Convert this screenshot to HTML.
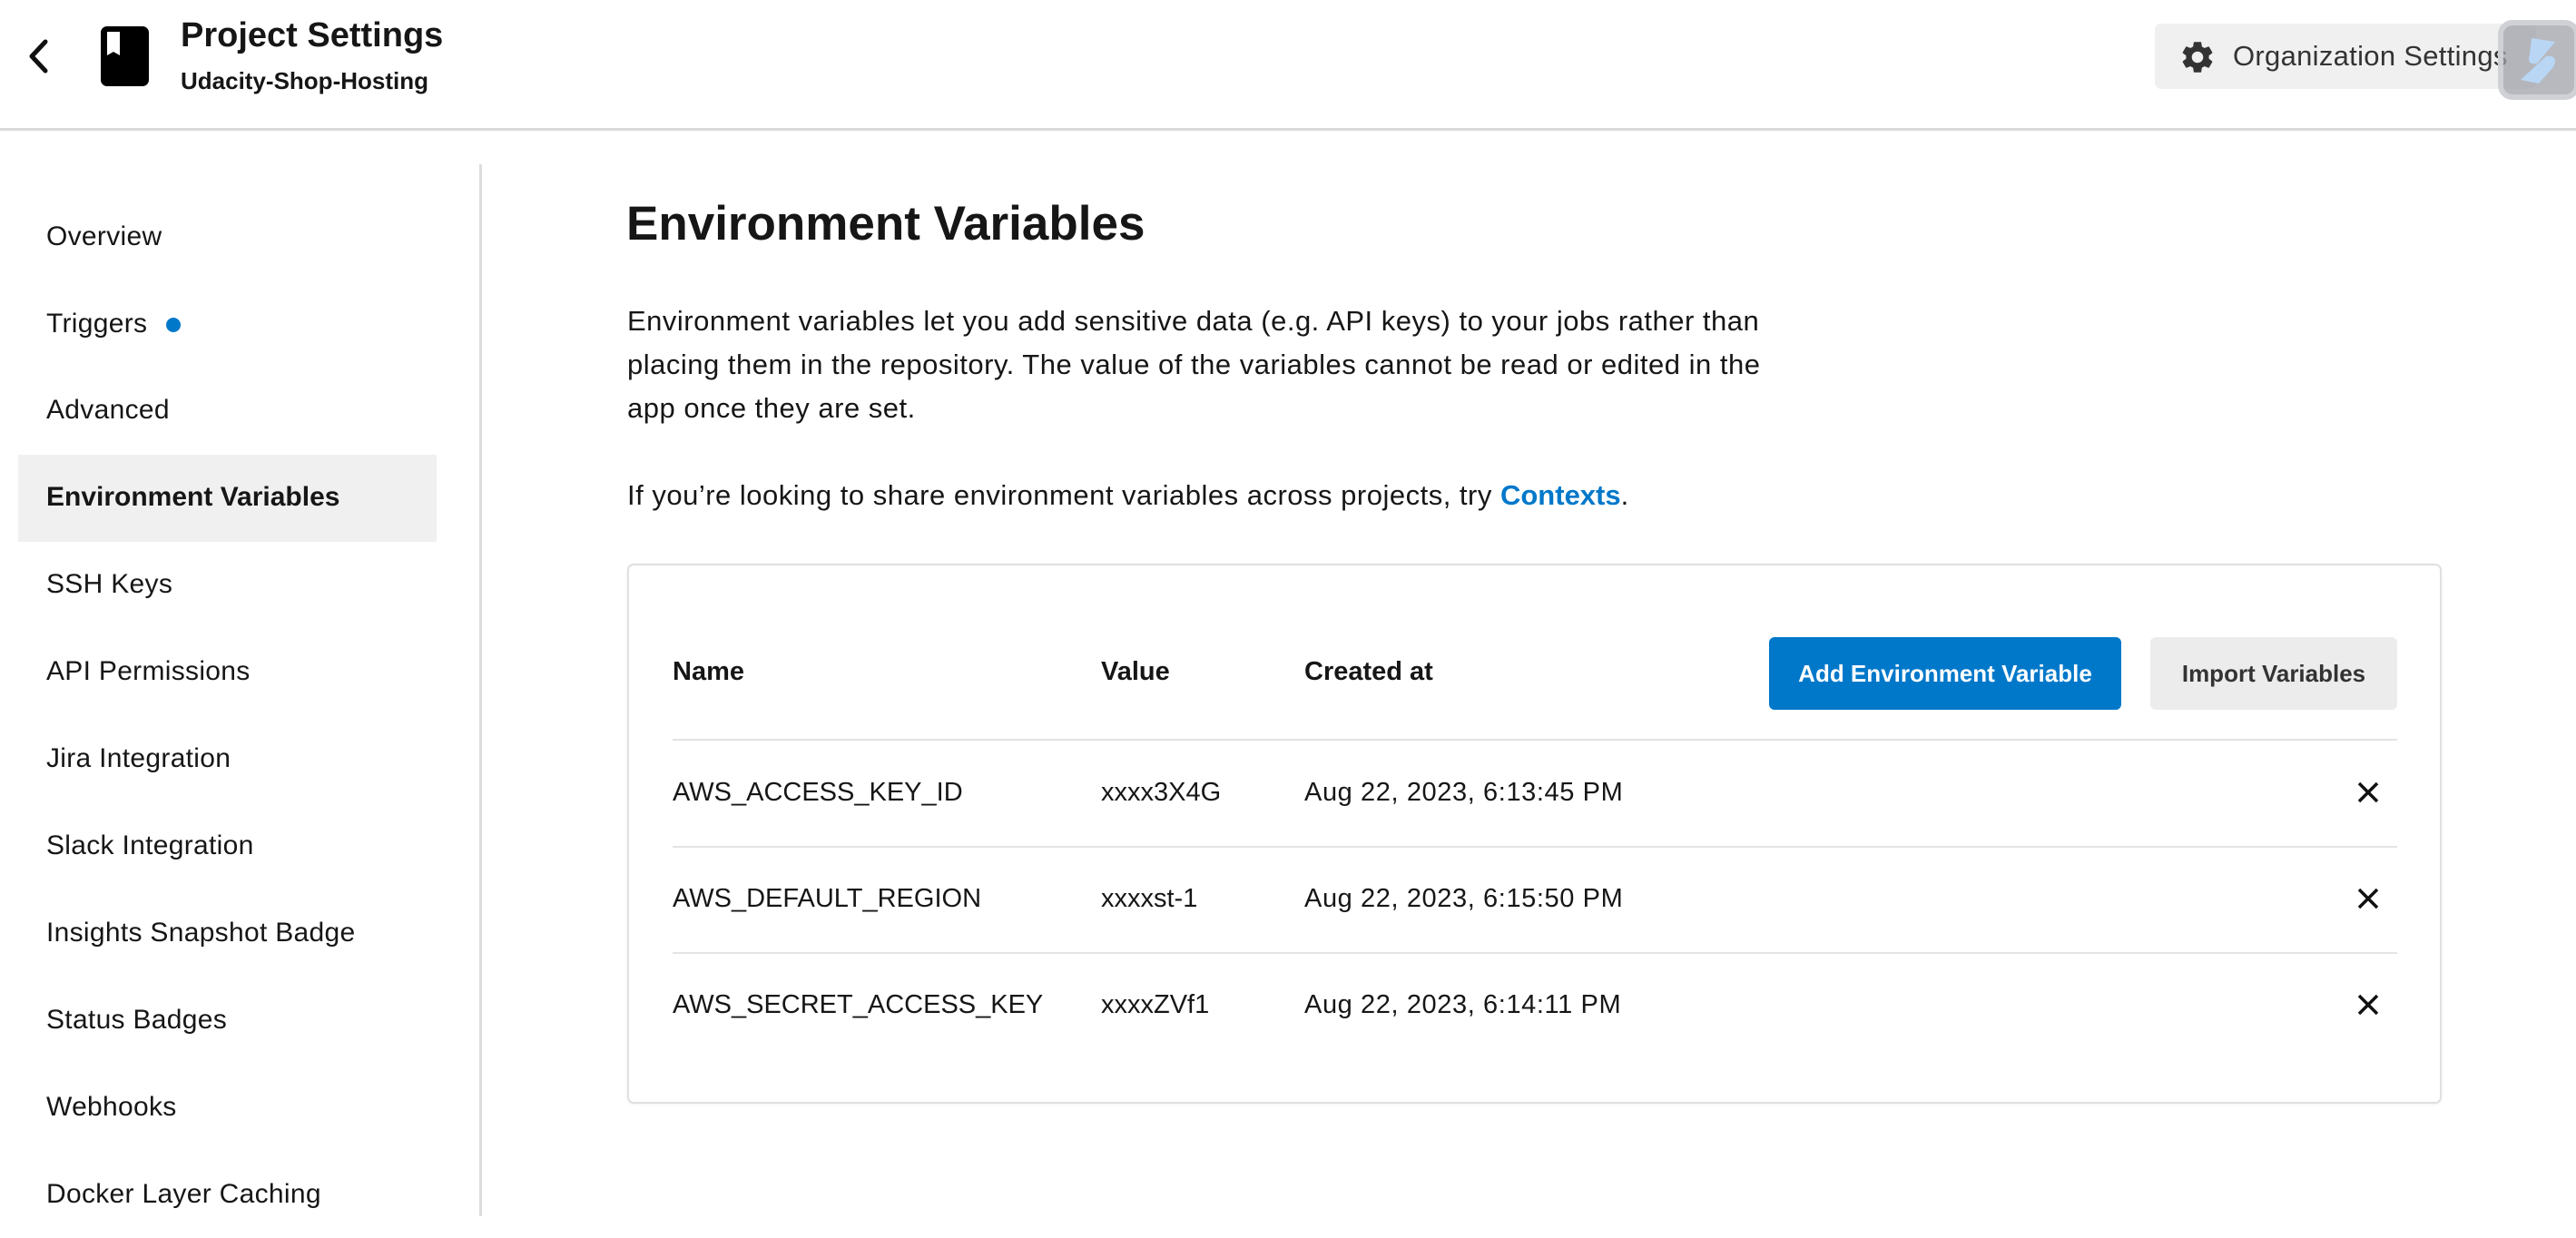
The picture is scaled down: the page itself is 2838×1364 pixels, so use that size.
<!DOCTYPE html>
<html><head><meta charset="utf-8"><style>
*{margin:0;padding:0;box-sizing:border-box}
body{width:2838px;height:1340px;overflow:hidden;background:#fff;font-family:"Liberation Sans",sans-serif;color:#161616;position:relative}
.a{position:absolute;white-space:nowrap}
.nav{position:absolute;left:51px;font-size:30px;height:96px;line-height:96px;letter-spacing:0.3px}
.th{font-weight:bold;font-size:29px}
.td{font-size:29px}
.sep{position:absolute;left:741px;width:1900px;height:2px;background:#e3e3e3}
</style></head><body>
<svg class="a" style="left:28px;top:42px" width="28" height="40" viewBox="0 0 28 40"><path d="M22 4 L7 20 L22 36" fill="none" stroke="#111" stroke-width="5" stroke-linecap="round" stroke-linejoin="round"/></svg>
<svg class="a" style="left:110px;top:28px" width="58" height="68" viewBox="0 0 58 68"><rect x="1" y="1" width="53" height="66" rx="7" fill="#000"/><path d="M8 7 h14 v26 l-7 -4 l-7 4 z" fill="#fff"/></svg>
<div class="a" style="left:199px;top:18px;font-size:38px;font-weight:bold">Project Settings</div>
<div class="a" style="left:199px;top:74px;font-size:26px;font-weight:bold">Udacity-Shop-Hosting</div>
<div class="a" style="left:2374px;top:26px;width:420px;height:72px;background:#f0f0f0;border-radius:7px"></div>
<svg class="a" style="left:2400px;top:42px" width="42" height="42" viewBox="0 0 24 24"><path fill="#333" d="M19.14 12.94c.04-.3.06-.61.06-.94 0-.32-.02-.64-.07-.94l2.030-1.580a.49.49 0 0 0 .12-.61l-1.920-3.320a.49.49 0 0 0-.59-.22l-2.390.96c-.5-.38-1.030-.7-1.620-.94l-.36-2.540a.48.48 0 0 0-.48-.41h-3.840c-.24 0-.43.17-.47.41l-.36 2.540c-.59.24-1.130.57-1.620.94l-2.390-.96a.48.48 0 0 0-.59.22L2.740 8.870c-.12.21-.08.47.12.61l2.030 1.580c-.05.3-.09.63-.09.94s.02.64.07.94l-2.030 1.580a.49.49 0 0 0-.12.61l1.920 3.320c.12.22.37.29.59.22l2.390-.96c.5.38 1.030.7 1.620.94l.36 2.540c.05.24.24.41.48.41h3.840c.24 0 .44-.17.47-.41l.36-2.540c.59-.24 1.130-.56 1.620-.94l2.390.96c.22.08.47 0 .59-.22l1.920-3.320c.12-.22.07-.47-.12-.61l-2.010-1.580zM12 15.6c-1.980 0-3.6-1.620-3.6-3.6s1.620-3.6 3.6-3.6 3.6 1.620 3.6 3.6-1.620 3.6-3.6 3.6z"/></svg>
<div class="a" style="left:2460px;top:44px;font-size:31px;color:#333;letter-spacing:0.3px">Organization Settings</div>
<div class="a" style="left:2752px;top:22px;width:90px;height:88px;border-radius:16px;background:rgba(160,162,168,.75);border:6px solid rgba(210,212,216,.9)"></div>
<svg class="a" style="left:2775px;top:40px" width="50" height="55" viewBox="0 0 50 55"><path d="M14 2 L40 6 L20 30 Q8 32 12 20 Z" fill="#b9d6f5"/><path d="M30 22 Q44 20 38 34 L22 52 L2 48 Z" fill="#b9d6f5"/></svg>
<div class="a" style="left:0;top:141px;width:2838px;height:3px;background:#d9d9d9"></div>
<div class="a" style="left:528px;top:181px;width:3px;height:1159px;background:#dcdcdc"></div>
<div class="a" style="left:20px;top:501px;width:461px;height:96px;background:#f0f0f0"></div>
<div class="nav" style="top:213px">Overview</div>
<div class="nav" style="top:309px">Triggers <span style="display:inline-block;width:16px;height:16px;border-radius:50%;background:#0078ca;margin-left:12px;vertical-align:middle"></span></div>
<div class="nav" style="top:404px">Advanced</div>
<div class="nav" style="top:500px;font-weight:bold;letter-spacing:0">Environment Variables</div>
<div class="nav" style="top:596px">SSH Keys</div>
<div class="nav" style="top:692px">API Permissions</div>
<div class="nav" style="top:788px">Jira Integration</div>
<div class="nav" style="top:884px">Slack Integration</div>
<div class="nav" style="top:980px">Insights Snapshot Badge</div>
<div class="nav" style="top:1076px">Status Badges</div>
<div class="nav" style="top:1172px">Webhooks</div>
<div class="nav" style="top:1268px">Docker Layer Caching</div>
<div class="a" style="left:690px;top:216px;font-size:53px;font-weight:bold">Environment Variables</div>
<div class="a" style="left:691px;top:330px;font-size:31px;line-height:48px;letter-spacing:0.5px">Environment variables let you add sensitive data (e.g. API keys) to your jobs rather than<br>placing them in the repository. The value of the variables cannot be read or edited in the<br>app once they are set.</div>
<div class="a" style="left:691px;top:522px;font-size:31px;line-height:48px;letter-spacing:0.5px">If you’re looking to share environment variables across projects, try <b style="color:#0078ca;letter-spacing:0">Contexts</b>.</div>
<div class="a" style="left:691px;top:621px;width:1999px;height:595px;border:2px solid #e0e0e0;border-radius:7px;box-shadow:0 1px 3px rgba(0,0,0,.06)"></div>
<div class="a th" style="left:741px;top:724px">Name</div>
<div class="a th" style="left:1213px;top:724px">Value</div>
<div class="a th" style="left:1437px;top:724px">Created at</div>
<div class="a" style="left:1949px;top:702px;width:388px;height:80px;background:#0078ca;border-radius:6px;color:#fff;font-size:26px;font-weight:bold;text-align:center;line-height:80px">Add Environment Variable</div>
<div class="a" style="left:2369px;top:702px;width:272px;height:80px;background:#ececec;border-radius:6px;color:#333;font-size:26px;font-weight:bold;text-align:center;line-height:80px">Import Variables</div>
<div class="sep" style="top:814px"></div>
<div class="sep" style="top:932px"></div>
<div class="sep" style="top:1049px"></div>
<div class="a td" style="left:741px;top:857px">AWS_ACCESS_KEY_ID</div>
<div class="a td" style="left:1213px;top:857px">xxxx3X4G</div>
<div class="a td" style="left:1437px;top:857px;letter-spacing:0.6px">Aug 22, 2023, 6:13:45 PM</div>
<div class="a td" style="left:741px;top:974px">AWS_DEFAULT_REGION</div>
<div class="a td" style="left:1213px;top:974px">xxxxst-1</div>
<div class="a td" style="left:1437px;top:974px;letter-spacing:0.6px">Aug 22, 2023, 6:15:50 PM</div>
<div class="a td" style="left:741px;top:1091px">AWS_SECRET_ACCESS_KEY</div>
<div class="a td" style="left:1213px;top:1091px">xxxxZVf1</div>
<div class="a td" style="left:1437px;top:1091px;letter-spacing:0.6px">Aug 22, 2023, 6:14:11 PM</div>
<svg class="a" style="left:2596px;top:860px" width="26" height="26" viewBox="0 0 26 26"><path d="M3 3L23 23M23 3L3 23" stroke="#111" stroke-width="3.5"/></svg>
<svg class="a" style="left:2596px;top:977px" width="26" height="26" viewBox="0 0 26 26"><path d="M3 3L23 23M23 3L3 23" stroke="#111" stroke-width="3.5"/></svg>
<svg class="a" style="left:2596px;top:1094px" width="26" height="26" viewBox="0 0 26 26"><path d="M3 3L23 23M23 3L3 23" stroke="#111" stroke-width="3.5"/></svg>
</body></html>
